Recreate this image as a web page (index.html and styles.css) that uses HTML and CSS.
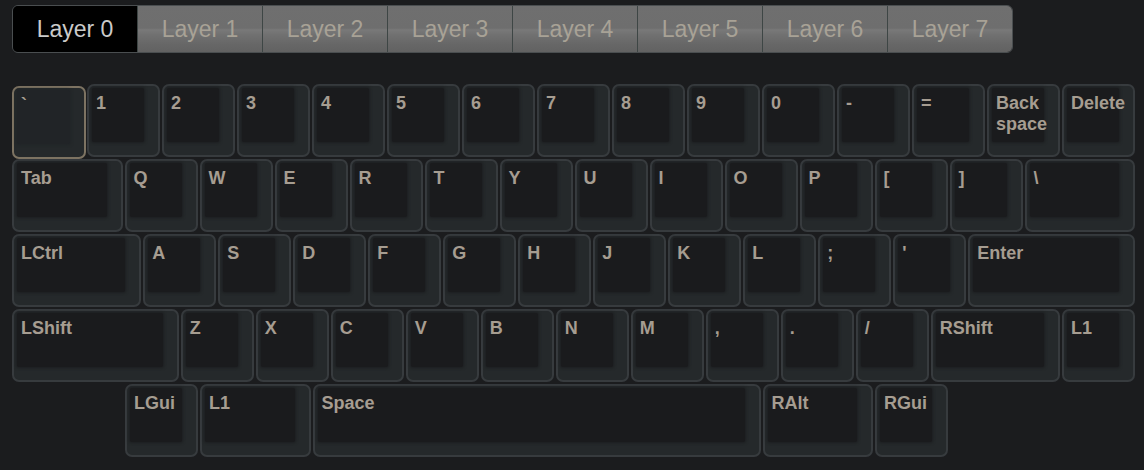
FILE: index.html
```html
<!DOCTYPE html>
<html>
<head>
<meta charset="utf-8">
<link rel="stylesheet" href="styles.css">
</head>
<body>
<div class="page">
  <div class="tabs">
    <div class="tab active">Layer 0</div>
    <div class="tab">Layer 1</div>
    <div class="tab">Layer 2</div>
    <div class="tab">Layer 3</div>
    <div class="tab">Layer 4</div>
    <div class="tab">Layer 5</div>
    <div class="tab">Layer 6</div>
    <div class="tab">Layer 7</div>
  </div>
  <div class="keyboard">
    <div class="row">
      <div class="key selected"><div class="face">`</div></div>
      <div class="key"><div class="face">1</div></div>
      <div class="key"><div class="face">2</div></div>
      <div class="key"><div class="face">3</div></div>
      <div class="key"><div class="face">4</div></div>
      <div class="key"><div class="face">5</div></div>
      <div class="key"><div class="face">6</div></div>
      <div class="key"><div class="face">7</div></div>
      <div class="key"><div class="face">8</div></div>
      <div class="key"><div class="face">9</div></div>
      <div class="key"><div class="face">0</div></div>
      <div class="key"><div class="face">-</div></div>
      <div class="key"><div class="face">=</div></div>
      <div class="key"><div class="face">Back<br>space</div></div>
      <div class="key"><div class="face">Delete</div></div>
    </div>
    <div class="row">
      <div class="key w150"><div class="face">Tab</div></div>
      <div class="key"><div class="face">Q</div></div>
      <div class="key"><div class="face">W</div></div>
      <div class="key"><div class="face">E</div></div>
      <div class="key"><div class="face">R</div></div>
      <div class="key"><div class="face">T</div></div>
      <div class="key"><div class="face">Y</div></div>
      <div class="key"><div class="face">U</div></div>
      <div class="key"><div class="face">I</div></div>
      <div class="key"><div class="face">O</div></div>
      <div class="key"><div class="face">P</div></div>
      <div class="key"><div class="face">[</div></div>
      <div class="key"><div class="face">]</div></div>
      <div class="key w150"><div class="face">\</div></div>
    </div>
    <div class="row">
      <div class="key w175"><div class="face">LCtrl</div></div>
      <div class="key"><div class="face">A</div></div>
      <div class="key"><div class="face">S</div></div>
      <div class="key"><div class="face">D</div></div>
      <div class="key"><div class="face">F</div></div>
      <div class="key"><div class="face">G</div></div>
      <div class="key"><div class="face">H</div></div>
      <div class="key"><div class="face">J</div></div>
      <div class="key"><div class="face">K</div></div>
      <div class="key"><div class="face">L</div></div>
      <div class="key"><div class="face">;</div></div>
      <div class="key"><div class="face">'</div></div>
      <div class="key w225"><div class="face">Enter</div></div>
    </div>
    <div class="row">
      <div class="key w225"><div class="face">LShift</div></div>
      <div class="key"><div class="face">Z</div></div>
      <div class="key"><div class="face">X</div></div>
      <div class="key"><div class="face">C</div></div>
      <div class="key"><div class="face">V</div></div>
      <div class="key"><div class="face">B</div></div>
      <div class="key"><div class="face">N</div></div>
      <div class="key"><div class="face">M</div></div>
      <div class="key"><div class="face">,</div></div>
      <div class="key"><div class="face">.</div></div>
      <div class="key"><div class="face">/</div></div>
      <div class="key w175"><div class="face">RShift</div></div>
      <div class="key"><div class="face">L1</div></div>
    </div>
    <div class="row offset">
      <div class="key"><div class="face">LGui</div></div>
      <div class="key w150"><div class="face">L1</div></div>
      <div class="key w600"><div class="face">Space</div></div>
      <div class="key w150"><div class="face">RAlt</div></div>
      <div class="key"><div class="face">RGui</div></div>
    </div>
  </div>
</div>
</body>
</html>
```
FILE: styles.css
```css
html, body {
  margin: 0;
  padding: 0;
  background: #1b1c1e;
}
body {
  font-family: "Liberation Sans", Arial, sans-serif;
}
.page {
  padding: 5px 0 0 12px;
}
.tabs {
  display: flex;
  width: 1001px;
  height: 48px;
  box-sizing: border-box;
  border: 1px solid #4a4e50;
  border-radius: 6px;
  overflow: hidden;
}
.tab {
  width: 125px;
  box-sizing: border-box;
  border-left: 1px solid #3e4645;
  display: flex;
  align-items: center;
  justify-content: center;
  font-size: 23px;
  color: #a8a296;
  background: linear-gradient(#6f6f6f 0%, #6e6e6e 48%, #797979 52%, #717171 62%, #666666 85%, #626262 100%);
}
.tab:first-child {
  border-left: none;
  width: 124px;
}
.tab.active {
  background: #000;
  color: #cacaca;
}
.keyboard {
  margin-top: 31px;
  display: flex;
  flex-direction: column;
  gap: 2px;
}
.row {
  display: flex;
  gap: 2px;
  align-items: flex-start;
  height: 73px;
}
.row.offset {
  padding-left: 113px;
}
.key {
  box-sizing: border-box;
  width: 73px;
  height: 73px;
  border: 2px solid #373b3e;
  border-radius: 7px;
  background: #25292b;
  padding: 2px 14px 13px 3px;
  flex: none;
}
.w150 { width: 110.5px; }
.w175 { width: 129.25px; }
.w225 { width: 166.75px; }
.w600 { width: 448px; }
.face {
  height: 100%;
  box-sizing: border-box;
  background: #1a1b1d;
  border-radius: 2px;
  box-shadow: 0 0 3px 1px rgba(27, 28, 30, 0.85);
  padding: 5px 4px 0 4px;
  font-size: 18px;
  font-weight: bold;
  line-height: 21px;
  color: #a69d91;
  white-space: nowrap;
}
.key.selected {
  margin-top: 2px;
  border-color: #7d7362;
  width: 74px;
  margin-right: -1px;
}
.key.selected .face {
  background: #212427;
  box-shadow: 0 0 3px 1px rgba(33, 36, 39, 0.85);
}
```
